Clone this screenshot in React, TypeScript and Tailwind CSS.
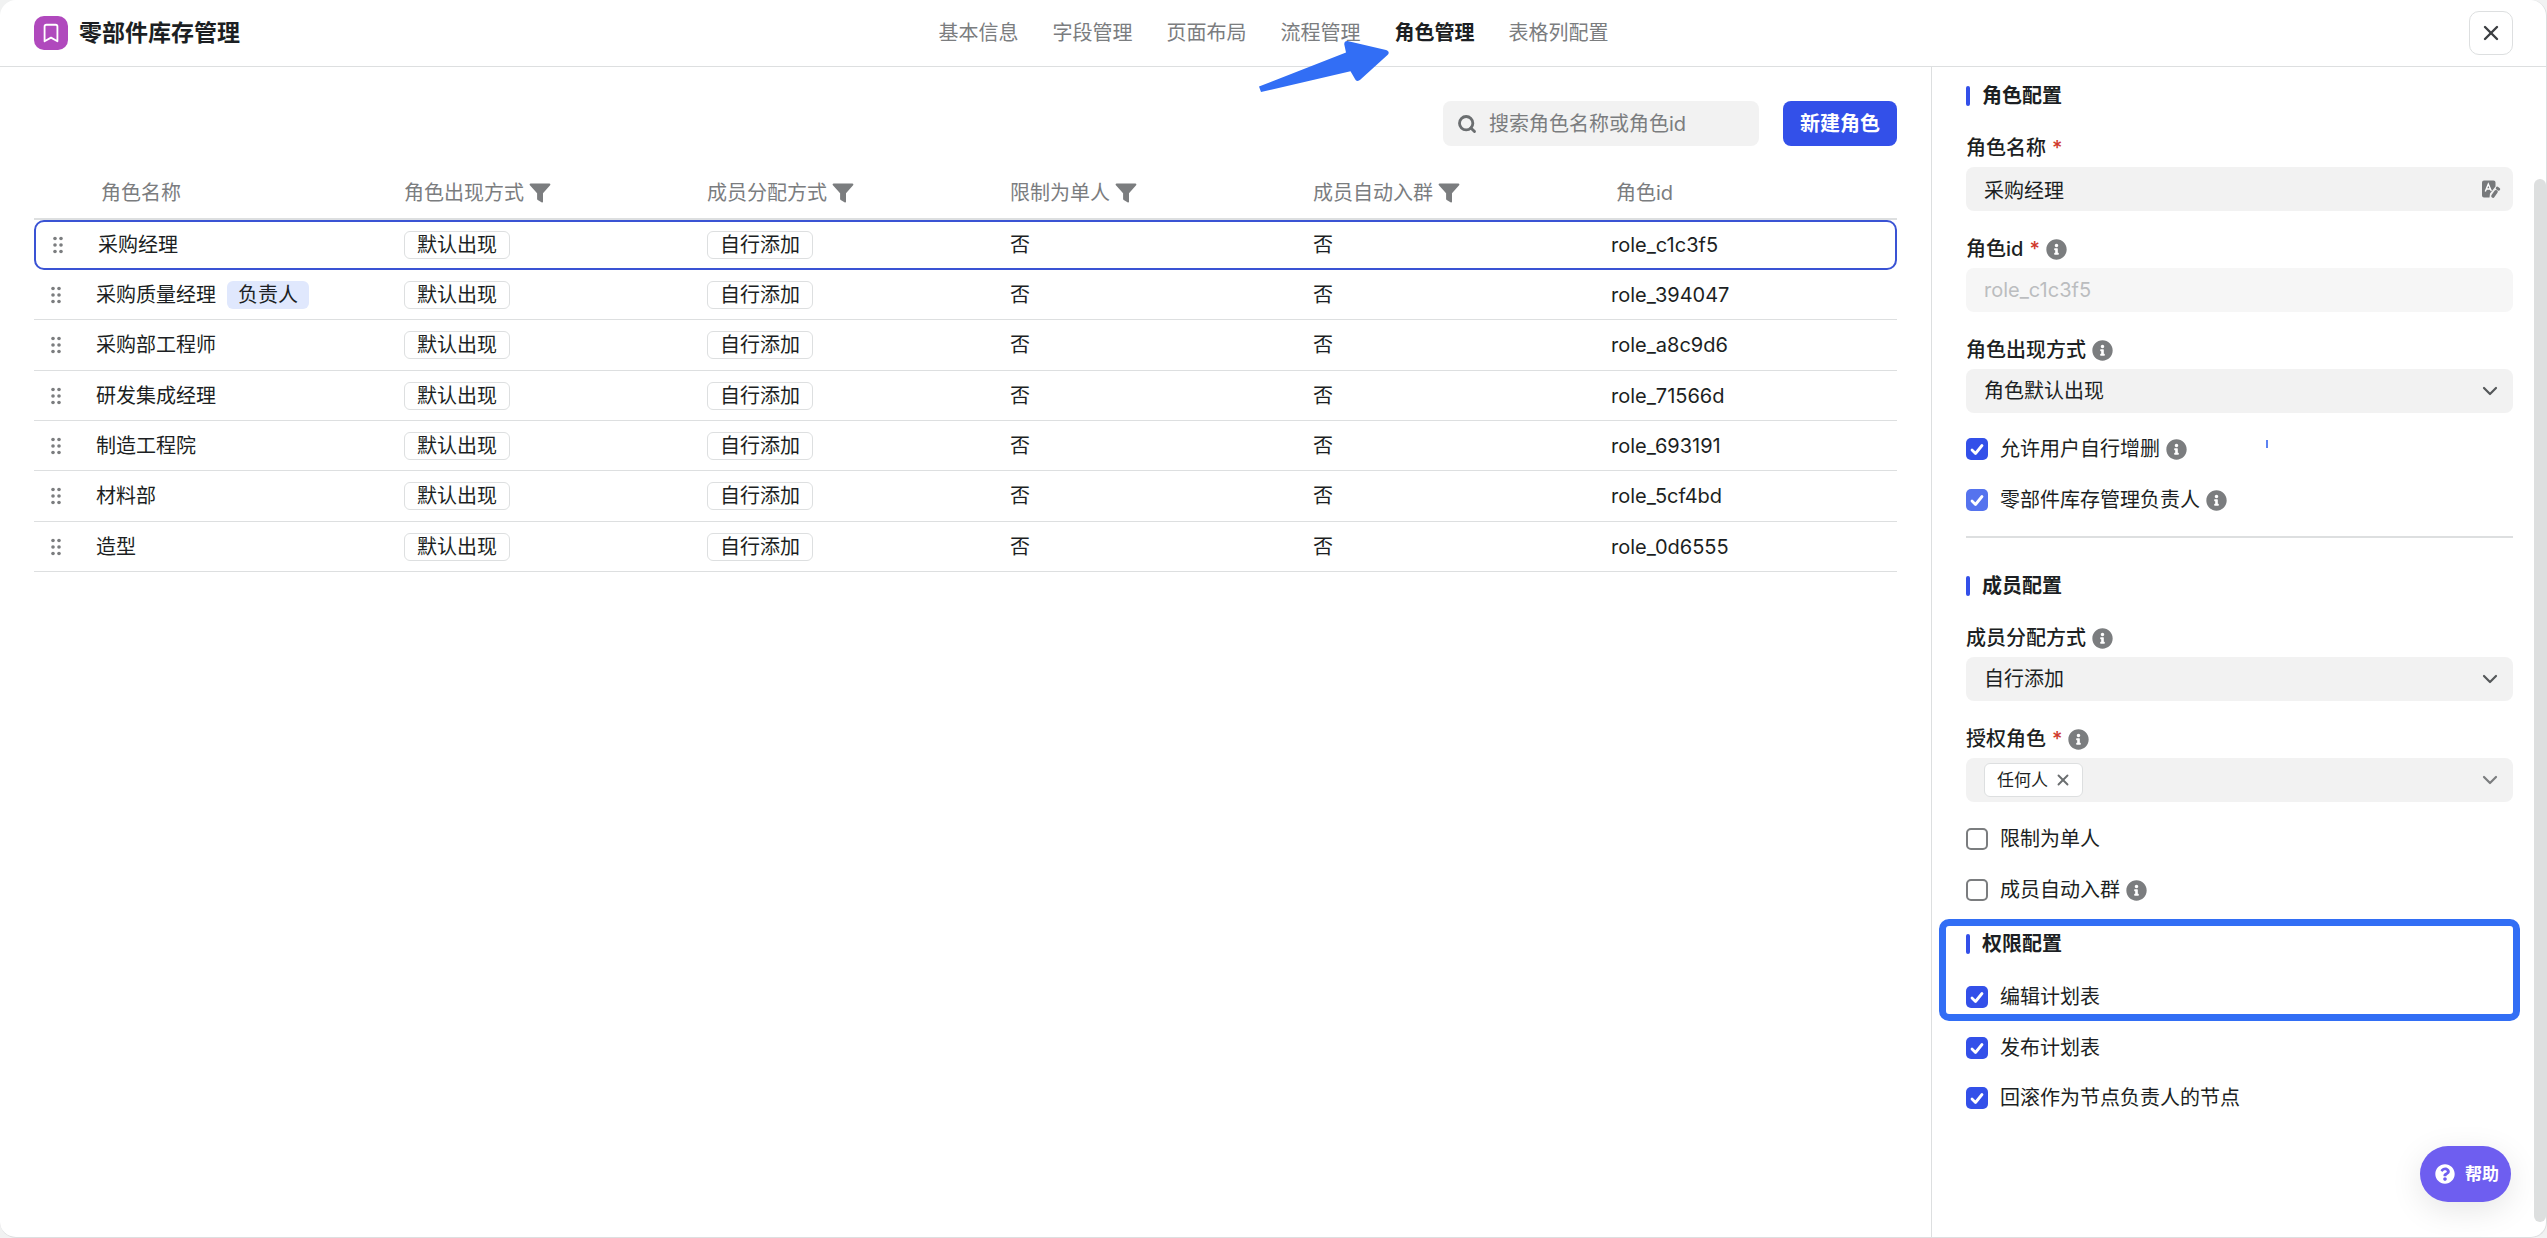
import type { ReactNode } from "react";
import { Bookmark, ChevronDown, Search, X } from "lucide-react";
import { FaInfoCircle, FaQuestionCircle } from "react-icons/fa";

const TABS = [
  "基本信息",
  "字段管理",
  "页面布局",
  "流程管理",
  "角色管理",
  "表格列配置",
];

const ACTIVE_TAB = "角色管理";

const COLUMNS = [
  { title: "角色出现方式", filter: true },
  { title: "成员分配方式", filter: true },
  { title: "限制为单人", filter: true },
  { title: "成员自动入群", filter: true },
  { title: "角色id", filter: false },
];

const ROLES = [
  { id: "role_c1c3f5", name: "采购经理", selected: true },
  { id: "role_394047", name: "采购质量经理", owner: true },
  { id: "role_a8c9d6", name: "采购部工程师" },
  { id: "role_71566d", name: "研发集成经理" },
  { id: "role_693191", name: "制造工程院" },
  { id: "role_5cf4bd", name: "材料部" },
  { id: "role_0d6555", name: "造型" },
];

const FilterIcon = () => (
  <svg width="22" height="20" viewBox="0 0 22 20" className="shrink-0 text-[#7b7d7f]">
    <path
      fill="currentColor"
      d="M1.600 0.500h18.800c.9 0 1.300 1 .7 1.700L14 10.200v8.600c0 .6-.6.9-1.100.6l-4.200-2.500c-.4-.2-.6-.6-.6-1v-5.700L.9 2.200C.3 1.500.7.5 1.600.5z"
    />
  </svg>
);

const DragIcon = () => (
  <svg width="12" height="20" viewBox="0 0 12 20" fill="#7b7d7f">
    <circle cx="3" cy="3.500" r="1.800" />
    <circle cx="9" cy="3.500" r="1.800" />
    <circle cx="3" cy="10" r="1.800" />
    <circle cx="9" cy="10" r="1.800" />
    <circle cx="3" cy="16.500" r="1.800" />
    <circle cx="9" cy="16.500" r="1.800" />
  </svg>
);

const LanguageIcon = () => (
  <svg width="20" height="20" viewBox="0 0 20 20" fill="none">
    <path
      fill="#77797b"
      d="M3 1.500h9.500a2 2 0 0 1 2 2v4l-5.500 7-.5 4H3a2 2 0 0 1-2-2v-13a2 2 0 0 1 2-2z"
    />
    <path d="M4.300 12.500L7.300 5l3 7M5.500 10h3.800" stroke="#fff" strokeWidth="1.400" />
    <path d="M12 17l3-4.200" stroke="#77797b" strokeWidth="3.600" strokeLinecap="round" />
    <path d="M16.300 9.200l1.400 1" stroke="#77797b" strokeWidth="3" strokeLinecap="round" />
  </svg>
);

const Info = () => <FaInfoCircle className="size-[21px] shrink-0 text-[#7b7d7f]" />;

const Tag = ({ children }: { children: ReactNode }) => (
  <span className="inline-flex h-7 items-center rounded-md border border-[#dddfe0] px-3">
    {children}
  </span>
);

const SectionTitle = ({ children }: { children: ReactNode }) => (
  <h2 className="flex h-7 items-center gap-3 text-xl font-bold">
    <span className="h-5 w-1 rounded-sm bg-[#3350e9]" />
    {children}
  </h2>
);

type FieldProps = {
  id: string;
  label: string;
  required?: boolean;
  info?: boolean;
  children: ReactNode;
};

const Field = ({ id, label, required, info, children }: FieldProps) => (
  <div className="mt-6">
    <div className="mb-[5px] flex h-7 items-center gap-1.5">
      <label htmlFor={id} className="font-medium">
        {label}
        {required && <span className="ml-1.5 text-[#d0392b]">*</span>}
      </label>
      {info && <Info />}
    </div>
    <div className="relative">{children}</div>
  </div>
);

const Select = ({ id, value }: { id: string; value: string }) => (
  <>
    <select
      id={id}
      defaultValue={value}
      className="h-11 w-full appearance-none rounded-lg bg-[#f2f2f2] px-[18px]"
    >
      <option>{value}</option>
    </select>
    <ChevronDown
      className="pointer-events-none absolute top-2.5 right-[11px] size-6 text-[#55585a]"
      strokeWidth={2.2}
    />
  </>
);

type CheckProps = {
  label: string;
  checked?: boolean;
  disabled?: boolean;
  info?: boolean;
};

const Check = ({ label, checked, disabled, info }: CheckProps) => (
  <div className="flex h-7 items-center gap-1.5">
    <label className="flex items-center gap-3">
      <span className="relative flex size-[22px]">
        <input
          type="checkbox"
          defaultChecked={checked}
          disabled={disabled}
          className="peer size-[22px] appearance-none rounded-[5px] border-2 border-[#7b7d7f] bg-white checked:border-0 checked:bg-[#3350e9] disabled:bg-[#5573ee]"
        />
        <svg
          viewBox="0 0 22 22"
          className="pointer-events-none absolute inset-0 hidden size-[22px] peer-checked:block"
        >
          <path
            d="M6 12l3.500 3.500L16 7.500"
            fill="none"
            stroke="#fff"
            strokeWidth="2.800"
            strokeLinecap="round"
            strokeLinejoin="round"
          />
        </svg>
      </span>
      {label}
    </label>
    {info && <Info />}
  </div>
);

const Header = () => (
  <header className="relative grid h-[67px] grid-cols-[1fr_auto_1fr] items-center border-b border-[#dddfe0] pr-[33px] pl-[34px]">
    <div className="flex items-center gap-[11px]">
      <span className="flex size-[34px] items-center justify-center rounded-[10px] bg-[#b049bd] text-white">
        <Bookmark className="size-[22px]" strokeWidth={2} />
      </span>
      <h1 className="text-[23px] leading-8 font-bold">零部件库存管理</h1>
    </div>
    <nav className="flex gap-[34px]">
      {TABS.map((tab) => (
        <a
          key={tab}
          href="#"
          className={tab === ACTIVE_TAB ? "font-bold text-[#1c1f23]" : "text-[#7b7d7f]"}
        >
          {tab}
        </a>
      ))}
    </nav>
    <button
      aria-label="关闭"
      className="flex size-11 items-center justify-center justify-self-end rounded-[10px] border border-[#dddfe0]"
    >
      <X className="size-6 text-[#3c3f42]" strokeWidth={2.4} />
    </button>
    {/* arrow pointing at the active tab */}
    <svg
      width="132"
      height="54"
      viewBox="0 0 132 54"
      className="pointer-events-none absolute top-10 left-1/2 -ml-[14px]"
    >
      <path
        fill="#326ef5"
        d="M0 46.500L87 12.500 85.300 4.500C85 1.500 87 .5 89.500 1.200L127 10C130 11 130.500 13 128.500 15L101.500 39.500C99.500 41.500 97 41.500 96 39L91.500 31.300 2 52z"
      />
    </svg>
  </header>
);

const RoleTable = () => (
  <table className="w-full table-fixed border-separate border-spacing-0 text-left">
    <colgroup>
      <col className="w-[45px]" />
      <col />
      <col />
      <col />
      <col />
      <col />
      <col />
    </colgroup>
    <thead>
      <tr className="text-[#7b7d7f] [&>th]:border-b-2 [&>th]:border-[#dddfe0] [&>th]:pt-0.5 [&>th]:font-normal">
        <th className="h-[54px]" />
        <th className="pl-[22px]">角色名称</th>
        {COLUMNS.map(({ title, filter }) => (
          <th key={title} className="pl-[22px]">
            <span className="flex items-center gap-[5px]">
              {title}
              {filter && (
                <button aria-label={`筛选${title}`}>
                  <FilterIcon />
                </button>
              )}
            </span>
          </th>
        ))}
      </tr>
    </thead>
    <tbody>
      {ROLES.map((role) => (
        <tr
          key={role.id}
          className={
            role.selected
              ? "rounded-[10px] outline-2 -outline-offset-2 outline-[#3a53d4] [&>td]:border-transparent"
              : "[&:nth-child(3n)>td]:h-[51px] [&>td]:border-[#dddfe0]"
          }
        >
          <td className={`h-[50px] border-b ${role.selected ? "pl-[18px]" : "pl-4"}`}>
            <DragIcon />
          </td>
          <td className={`border-b ${role.selected ? "pl-[19px]" : "pl-[17px]"}`}>
            <span className="flex items-center gap-[11px]">
              {role.name}
              {role.owner && (
                <span className="inline-flex h-7 items-center rounded-md bg-[#e0e8fd] px-[11px]">
                  负责人
                </span>
              )}
            </span>
          </td>
          <td className="border-b pl-[22px]">
            <Tag>默认出现</Tag>
          </td>
          <td className="border-b pl-[22px]">
            <Tag>自行添加</Tag>
          </td>
          <td className="border-b pl-[22px]">否</td>
          <td className="border-b pl-[22px]">否</td>
          <td className="border-b pl-[17px]">{role.id}</td>
        </tr>
      ))}
    </tbody>
  </table>
);

const ConfigPanel = () => (
  <aside className="w-[615px] shrink-0 border-l border-[#dddfe0] pt-[15px] pr-[33px] pl-[34px]">
    <SectionTitle>角色配置</SectionTitle>
    <Field id="role-name" label="角色名称" required>
      <input
        id="role-name"
        defaultValue="采购经理"
        className="h-11 w-full rounded-lg bg-[#f2f2f2] px-[18px]"
      />
      <button aria-label="多语言" className="absolute top-3 right-3">
        <LanguageIcon />
      </button>
    </Field>
    <Field id="role-id" label="角色id" required info>
      <input
        id="role-id"
        defaultValue="role_c1c3f5"
        disabled
        className="h-11 w-full rounded-lg bg-[#f6f6f6] px-[18px] text-[#bbbdbf]"
      />
    </Field>
    <Field id="appear-mode" label="角色出现方式" info>
      <Select id="appear-mode" value="角色默认出现" />
    </Field>
    <div className="relative mt-[22px] flex flex-col gap-[23px]">
      <Check label="允许用户自行增删" checked info />
      <Check label="零部件库存管理负责人" checked disabled info />
      <span className="absolute top-[5px] left-[300px] h-2 w-0.5 bg-[#5c82f2]" />
    </div>
    <hr className="mt-[22px] border-t-2 border-[#dddfe0]" />

    <div className="mt-[34px]">
      <SectionTitle>成员配置</SectionTitle>
    </div>
    <Field id="assign-mode" label="成员分配方式" info>
      <Select id="assign-mode" value="自行添加" />
    </Field>
    <Field id="auth-role" label="授权角色" required info>
      <div className="flex h-11 items-center justify-between rounded-lg bg-[#f2f2f2] pr-[11px] pl-[18px]">
        <span className="flex h-[34px] items-center gap-1.5 rounded-md border border-[#dddfe0] bg-white pr-[10px] pl-3 text-[17px]">
          任何人
          <button aria-label="移除任何人">
            <X className="size-[18px] text-[#6b6e70]" strokeWidth={2.5} />
          </button>
        </span>
        <button id="auth-role" aria-label="选择授权角色">
          <ChevronDown className="size-6 text-[#7b7d7f]" strokeWidth={2.2} />
        </button>
      </div>
    </Field>
    <div className="mt-[23px] flex flex-col gap-[23px]">
      <Check label="限制为单人" />
      <Check label="成员自动入群" info />
    </div>

    <div className="relative mt-[26px] flex flex-col gap-[25px]">
      <SectionTitle>权限配置</SectionTitle>
      <Check label="编辑计划表" checked />
      {/* highlight frame */}
      <div className="pointer-events-none absolute -top-[11px] -right-[7px] -bottom-[10px] -left-[27px] rounded-[10px] border-7 border-[#326ef5]" />
    </div>
    <div className="mt-[23px] flex flex-col gap-[22px]">
      <Check label="发布计划表" checked />
      <Check label="回滚作为节点负责人的节点" checked />
    </div>
  </aside>
);

const App = () => {
  return (
    <div className="flex min-h-screen bg-[#f1f2f2] font-[Inter,'Noto_Sans_CJK_SC',sans-serif] text-xl leading-7 text-[#1c1f23]">
      <div className="relative flex flex-1 flex-col rounded-2xl border-r border-b border-[#dddfe0] bg-white">
        <Header />
        <div className="flex flex-1">
          <main className="flex-1 px-[34px] pt-[34px]">
            <div className="mb-5 flex justify-end gap-6">
              <label className="flex h-[45px] w-[316px] items-center gap-3 rounded-lg bg-[#f2f2f2] px-[14px]">
                <Search className="size-5 shrink-0 text-[#6b6e70]" strokeWidth={3.4} />
                <input
                  type="search"
                  aria-label="搜索角色"
                  placeholder="搜索角色名称或角色id"
                  className="min-w-0 flex-1 bg-transparent placeholder:text-[#7b7d7f]"
                />
              </label>
              <button className="h-[45px] rounded-lg bg-[#3350e9] px-[17px] font-bold text-white">
                新建角色
              </button>
            </div>
            <RoleTable />
          </main>
          <ConfigPanel />
        </div>
        {/* scroll thumb */}
        <div className="absolute top-[179px] right-0 bottom-[15px] w-3 rounded-full bg-[#dddfdf]" />
        <button className="absolute right-[35px] bottom-[35px] flex h-14 items-center gap-[10px] rounded-full bg-[#6e5ef0] pr-3 pl-[15px] text-[17px] font-bold text-white shadow-[0_8px_32px_rgba(0,0,0,0.1)]">
          <FaQuestionCircle className="size-5" />
          帮助
        </button>
      </div>
    </div>
  );
};

export default App;
